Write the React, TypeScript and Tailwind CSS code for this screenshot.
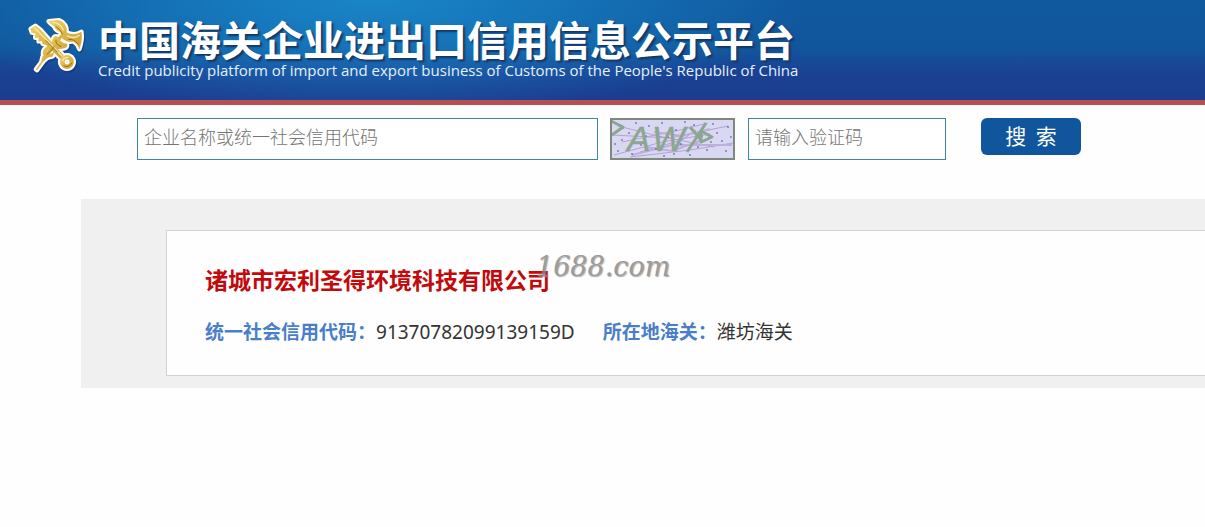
import React, { useState } from 'react';

const company = {
  name: '诸城市宏利圣得环境科技有限公司',
  creditCode: '91370782099139159D',
  customs: '潍坊海关',
};

// Crossed key and winged staff
function EmblemShape() {
  return (
    <>
      <path d="M48 178 L64 156 L68 140 L80 126 L112 86 L126 70 L131 76 L114 98 L96 122 L84 142 L70 154 L51 180 Z" />
      <path d="M86 34 L116 31 Q134 37 139 54 L140 68 Q164 79 184 66 Q188 88 178 117 Q174 102 160 94 Q142 98 128 86 L122 66 Q108 62 102 48 Q94 44 86 34 Z" />
      <path d="M32 57 L46 48 L60 58 L90 92 L130 136 L122 146 L78 104 L68 101 L66 92 L56 94 L57 82 L46 83 L47 69 L36 68 Z" />
      <path fillRule="evenodd" d="M141 136 A20 20 0 1 1 140.900 136 Z M141 148 A8 8 0 1 0 141.100 148 Z" />
      <path d="M98 92 Q100 76 112 80 L118 90 Q130 102 141 102 Q144 113 130 115 Q112 120 98 112 Q86 114 78 126 Q80 136 94 132 L102 126 L98 139 Q76 147 69 132 Q68 114 90 106 Z" />
    </>
  );
}

function Emblem() {
  return (
    <svg viewBox="18 18 180 174" className="h-[58px] w-[60px] shrink-0" aria-hidden="true">
      <defs>
        <linearGradient id="gold" x1="0" y1="0" x2="1" y2="1">
          <stop offset="0" stopColor="#f1d266" />
          <stop offset="0.5" stopColor="#dbb447" />
          <stop offset="1" stopColor="#cfa136" />
        </linearGradient>
      </defs>
      <g fill="#12306f" stroke="#12306f" strokeWidth="13" strokeLinejoin="round" opacity="0.5" transform="translate(4 5)">
        <EmblemShape />
      </g>
      <g fill="#fffdf5" stroke="#fffdf5" strokeWidth="14" strokeLinejoin="round">
        <EmblemShape />
      </g>
      <g fill="url(#gold)" stroke="#d0a844" strokeWidth="1" strokeLinejoin="round">
        <EmblemShape />
      </g>
      <g fill="none" stroke="#f9e9a6" strokeWidth="4" strokeLinecap="round">
        <path d="M44 54 L84 94 L126 138" />
        <path d="M98 37 Q122 38 130 60" />
        <path d="M142 78 Q164 88 178 76" />
        <path d="M128 152 Q132 142 144 142" />
      </g>
      <g fill="none" stroke="#96701d" strokeWidth="3" strokeLinecap="round">
        <path d="M108 50 Q118 54 128 72" />
        <path d="M146 88 Q162 86 174 102" />
        <path d="M82 132 Q92 126 102 110" />
        <path d="M108 90 Q104 102 122 109" />
        <path d="M78 92 L112 126" />
        <path d="M132 168 Q146 174 155 160" />
      </g>
    </svg>
  );
}

const specks = [
  [13, 10], [26, 5], [31, 27], [12, 22], [8, 33], [22, 36], [39, 8], [46, 31], [52, 5], [58, 19],
  [66, 12], [64, 36], [71, 26], [80, 37], [84, 7], [92, 18], [97, 32], [103, 6], [107, 15], [112, 23],
  [118, 9], [116, 33], [88, 29], [36, 18], [19, 15], [75, 4], [101, 24], [121, 19], [5, 26], [54, 38],
];

function Captcha() {
  return (
    <svg viewBox="0 0 125 42" className="h-[42px] w-[125px] shrink-0 cursor-pointer" role="img" aria-label="验证码">
      <rect width="125" height="42" fill="#d8d8f3" />
      <g fill="none" stroke="#b5a3d0" strokeWidth="1">
        <path d="M2 17 L60 20 L118 8" />
        <path d="M4 37 L52 24 L100 16" />
        <path d="M12 24 L70 12 L98 5" />
        <path d="M20 39 L80 32 L123 25" />
        <path d="M8 8 L48 18 L104 29" />
        <path d="M30 34 L72 22 L86 12" />
      </g>
      <g fill="none" stroke="#bdb0da" strokeWidth="2">
        <path d="M22 37 L62 27 L96 27 L122 27" />
        <path d="M44 14 L72 18 L100 11" />
        <path d="M36 29 L62 33 L92 22" />
      </g>
      {specks.map(([x, y]) => (
        <circle key={`${x}-${y}`} cx={x} cy={y} r="0.8" fill="#3b3f8c" />
      ))}
      <g fill="#8ba791" stroke="#8ba791" strokeWidth="0.4" fontFamily="'Liberation Sans', sans-serif" fontStyle="italic">
        <text x="17" y="33" fontSize="35">A</text>
        <text x="42" y="33" fontSize="35">W</text>
      </g>
      <g fill="none" stroke="#8ba791" strokeWidth="3" strokeLinejoin="round">
        <path d="M1 3 L13 9 L2 17" />
        <path d="M77 34 L96 5 M80 9 L92 23 M91 13 L102 19 L91 24 Z" />
      </g>
      <rect x="1" y="1" width="123" height="40" fill="none" stroke="#80877f" strokeWidth="2" />
    </svg>
  );
}

export default function App() {
  const [keyword, setKeyword] = useState('');
  const [code, setCode] = useState('');

  return (
    <div className="min-h-screen overflow-x-hidden bg-[#fefefe] font-['Noto_Sans','Noto_Sans_CJK_SC',sans-serif]">
      <header className="flex h-[105px] items-start border-b-5 border-[#b84e50] bg-[radial-gradient(ellipse_440px_115px_at_370px_0px,#1985c8_0%,#1985c8b0_35%,#1985c800_100%),linear-gradient(to_bottom,#10589f_0%,#11569c_48%,#1a4193_72%,#1b3c8f_100%)] pt-4 pl-[26px]">
        <Emblem />
        <div className="ml-3">
          <h1 className="text-[41px] leading-[44px] font-bold whitespace-nowrap text-white [text-shadow:2px_2px_2px_#173562] font-['Noto_Sans_CJK_SC',sans-serif]">
            中国海关企业进出口信用信息公示平台
          </h1>
          <p className="text-[15px] leading-5 whitespace-nowrap text-[#e4f0fb] font-['Open_Sans',sans-serif]">
            Credit publicity platform of import and export business of Customs of the People's Republic of China
          </p>
        </div>
      </header>

      <form className="flex items-start pt-[13px] pl-[137px]" onSubmit={(e) => e.preventDefault()}>
        <input
          type="text"
          aria-label="企业名称或统一社会信用代码"
          placeholder="企业名称或统一社会信用代码"
          value={keyword}
          onChange={(e) => setKeyword(e.target.value)}
          className="h-[42px] min-w-0 max-w-[461px] flex-1 border border-[#3d86a8] bg-white px-1.5 pb-1.5 text-lg text-gray-800 outline-none placeholder:text-[#757575] font-['Noto_Sans_CJK_SC',sans-serif] font-light"
        />
        <div className="ml-3">
          <Captcha />
        </div>
        <input
          type="text"
          aria-label="请输入验证码"
          placeholder="请输入验证码"
          value={code}
          onChange={(e) => setCode(e.target.value)}
          className="ml-[13px] h-[42px] w-[198px] border border-[#3d86a8] bg-white px-1.5 pb-1.5 text-lg text-gray-800 outline-none placeholder:text-[#757575] font-['Noto_Sans_CJK_SC',sans-serif] font-light"
        />
        <button
          type="submit"
          className="ml-[35px] h-[37px] w-[100px] rounded-md bg-[#11569c] pb-1 text-[21px] leading-8 text-white font-['Noto_Sans_CJK_SC',sans-serif]"
        >
          搜&nbsp;&nbsp;索
        </button>
      </form>

      <main className="mt-[39px] ml-[81px] bg-[#f0f0f0] pt-[31px] pb-3 pl-[85px]">
        <section className="relative border-y border-l border-[#d2d2d2] bg-[#fefefe] pt-[30px] pb-7 pl-[38px]">
          <h2 className="text-[23px] leading-9 font-bold text-[#c2090c] font-['Noto_Sans_CJK_SC',sans-serif]">{company.name}</h2>
          <dl className="mt-5 flex text-[19px] leading-[30px] whitespace-nowrap">
            <dt className="font-bold text-[#4a7ecb]">统一社会信用代码：</dt>
            <dd className="text-[#333]">{company.creditCode}</dd>
            <dt className="ml-7 font-bold text-[#4a7ecb]">所在地海关：</dt>
            <dd className="text-[#333]">{company.customs}</dd>
          </dl>
          <span className="pointer-events-none absolute top-5 left-[369px] text-[27px] leading-8 text-[#848484] italic opacity-80 [text-shadow:1px_1px_1px_#999] font-['DejaVu_Serif',serif]">
            1688.com
          </span>
        </section>
      </main>
    </div>
  );
}
